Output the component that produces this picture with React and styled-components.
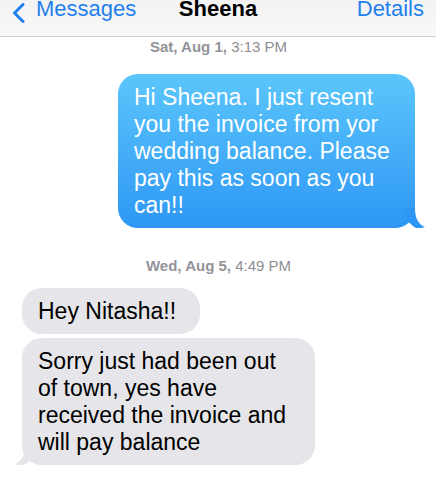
import React from 'react';
import styled, { createGlobalStyle } from 'styled-components';

const GlobalStyle = createGlobalStyle`
  html, body {
    margin: 0;
    padding: 0;
    background: #fff;
  }
  body {
    font-family: 'Liberation Sans', Arial, sans-serif;
    -webkit-font-smoothing: antialiased;
  }
`;

const Screen = styled.div`
  width: 436px;
  height: 480px;
  overflow: hidden;
  background: #fff;
`;

const NavBar = styled.div`
  display: grid;
  grid-template-columns: 1fr auto 1fr;
  align-items: start;
  height: 37px;
  box-sizing: border-box;
  padding: 0 12px 0 12px;
  background: linear-gradient(#f3f3f4, #f8f8f8);
  border-bottom: 1px solid #cfcfd3;
  font-size: 22px;
  line-height: 18px;
`;

const BackBtn = styled.div`
  display: flex;
  align-items: flex-start;
  gap: 11px;
  color: #1f80ee;
  svg {
    margin-top: 3px;
    flex: none;
  }
`;

const Title = styled.div`
  font-weight: bold;
  color: #000;
`;

const NavAction = styled.div`
  justify-self: end;
  color: #1f80ee;
`;

const Thread = styled.div`
  display: flex;
  flex-direction: column;
  padding: 0 21px 0 22px;
`;

const Stamp = styled.div`
  text-align: center;
  color: #8e8e93;
  font-size: 15px;
  line-height: 20px;
  margin-top: ${(p) => p.mt || 0}px;
  b {
    font-weight: bold;
    color: #939398;
  }
`;

const Bubble = styled.div`
  position: relative;
  align-self: ${(p) => (p.out ? 'flex-end' : 'flex-start')};
  box-sizing: border-box;
  white-space: pre-line;
  font-size: 23px;
  line-height: 27px;
  padding: 10px 16px 9px 16px;
  border-radius: 20px;
  margin-top: ${(p) => p.mt || 0}px;
  color: ${(p) => (p.out ? '#fff' : '#000')};
  background: ${(p) =>
    p.out ? 'linear-gradient(#5bc6fb, #2e97f5)' : '#e5e5ea'};
  width: ${(p) => (p.w ? p.w + 'px' : 'auto')};
`;

const Tail = styled.svg`
  position: absolute;
  bottom: 0;
  ${(p) => (p.out ? 'right: -10px;' : 'left: -7px;')}
`;

const Chevron = () => (
  <svg width="13" height="20" viewBox="0 0 13 20">
    <path
      d="M11 1.5 L2.5 10 L11 18.5"
      fill="none"
      stroke="#1f80ee"
      strokeWidth="3"
      strokeLinecap="round"
      strokeLinejoin="round"
    />
  </svg>
);

const App = () => {
  return (
    <>
      <GlobalStyle />
      <Screen>
        <NavBar>
          <BackBtn>
            <Chevron />
            <span>Messages</span>
          </BackBtn>
          <Title>Sheena</Title>
          <NavAction>Details</NavAction>
        </NavBar>

        <Thread>
          <Stamp>
            <b>Sat, Aug 1,</b> 3:13 PM
          </Stamp>
          <Bubble out w={297} mt={17}>
            {'Hi Sheena. I just resent\nyou the invoice from yor\nwedding balance. Please\npay this as soon as you\ncan!!'}
            <Tail out width="22" height="20" viewBox="0 0 22 20">
              <path d="M0 0 C2 10 6 16 13 20 C16 20.5 19 20 22 19 C15 16 12 10 12 0 Z" fill="#2e97f5" />
            </Tail>
          </Bubble>

          <Stamp mt={28}>
            <b>Wed, Aug 5,</b> 4:49 PM
          </Stamp>
          <Bubble w={178} mt={12}>
            Hey Nitasha!!
          </Bubble>
          <Bubble w={293} mt={4}>
            {'Sorry just had been out\nof town, yes have\nreceived the invoice and\nwill pay balance'}
            <Tail width="22" height="20" viewBox="0 0 22 20">
              <path d="M22 0 C20 10 16 16 9 20 C6 20.5 3 20 0 19 C7 16 10 10 10 0 Z" fill="#e5e5ea" />
            </Tail>
          </Bubble>
        </Thread>
      </Screen>
    </>
  );
};

export default App;
